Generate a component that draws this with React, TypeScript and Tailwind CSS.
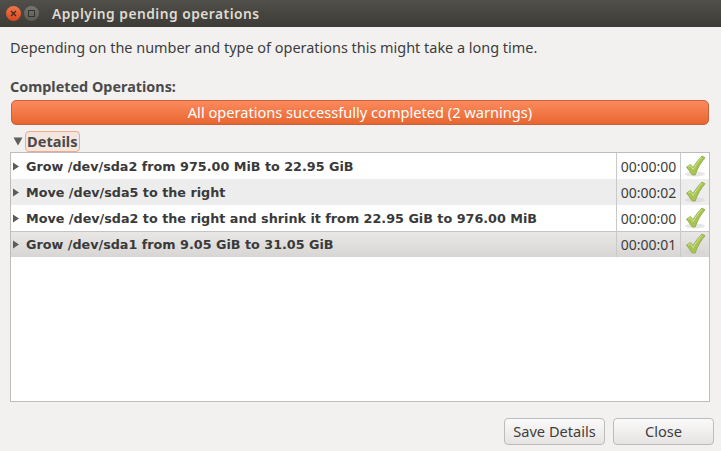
const rows = [
  { t: "Grow /dev/sda2 from 975.00 MiB to 22.95 GiB", d: "00:00:00", c: "bg-white" },
  { t: "Move /dev/sda5 to the right", d: "00:00:02", c: "bg-[#ededed]" },
  { t: "Move /dev/sda2 to the right and shrink it from 22.95 GiB to 976.00 MiB", d: "00:00:00", c: "bg-white" },
  { t: "Grow /dev/sda1 from 9.05 GiB to 31.05 GiB", d: "00:00:01", c: "bg-gradient-to-b from-[#e9e8e7] to-[#d8d6d4] shadow-[inset_0_1px_0_#c4c4c4]" },
];

function Check() {
  return (
    <svg width="22" height="24" viewBox="0 0 22 24" className="shrink-0">
      <ellipse cx="11" cy="20" rx="10" ry="2.5" fill="#d4d4d4" opacity="0.55" />
      <path d="M2.5 13 L6.5 10.5 L9 13.5 C11.5 9.5 14.5 5.5 18 2 L21 3.8 C17 8.5 13.5 14 11.2 21 L8.3 21 Z" fill="#a9c455" stroke="#8aa83e" strokeWidth="0.8" strokeLinejoin="round" />
      <path d="M4.2 13 L6.4 11.7 L9.2 15.4 C11.5 11 14.5 7 17.8 3.4" fill="none" stroke="#d2e68f" strokeWidth="1" />
    </svg>
  );
}

export default function App() {
  return (
    <div className="w-[721px] h-[451px] flex flex-col overflow-hidden bg-[#f2f1f0] font-['Noto_Sans',sans-serif] text-[#3c3c3c]">
      <div className="h-[27px] shrink-0 flex items-center bg-gradient-to-b from-[#514f49] to-[#3c3b37] pl-[6px]">
        <div className="w-[15px] h-[15px] rounded-full bg-gradient-to-b from-[#f0764a] to-[#d9471c] flex items-center justify-center">
          <svg width="7" height="7" viewBox="0 0 7 7"><path d="M1 1 L6 6 M6 1 L1 6" stroke="#41281f" strokeWidth="1.2" /></svg>
        </div>
        <div className="ml-[3px] w-[15px] h-[15px] rounded-full bg-gradient-to-b from-[#77756f] to-[#5c5a55] flex items-center justify-center">
          <div className="w-[7px] h-[7px] border border-[#35342f]" />
        </div>
        <span className="ml-[13px] text-[13.8px] font-semibold text-[#dfdbd2] tracking-[0.48px] leading-none">Applying pending operations</span>
      </div>
      <div className="flex-1 flex flex-col pl-[10px] pr-[11px]">
        <p className="mt-[12px] text-[14.45px] leading-[18px] text-[#3d3d3d]">Depending on the number and type of operations this might take a long time.</p>
        <p className="mt-[21px] text-[14.4px] leading-[18px] font-bold text-[#4a4a4a]">Completed Operations:</p>
        <div className="mt-[4px] mx-px h-[25px] rounded-[5px] border border-[#c9623a] bg-gradient-to-b from-[#fb8a5c] to-[#e8662f] flex items-center justify-center text-[14.6px] text-white">All operations successfully completed (2 warnings)</div>
        <div className="mt-[6px] h-[21px] flex items-center">
          <svg width="10" height="9" viewBox="0 0 10 9" className="ml-[3px]"><path d="M0.5 0.5 H9.5 L5 8.5 Z" fill="#5f5f5f" /></svg>
          <span className="ml-[2px] h-[21px] px-[1px] w-[55px] rounded-[4px] border border-[#efa98d] bg-[#f4e6df] text-[14.6px] leading-[19px] font-bold text-[#4a4a4a]">Details</span>
        </div>
        <div className="h-[250px] border border-[#bdbdbd] bg-white">
          {rows.map((r) => (
            <div key={r.t} className={`h-[26px] flex items-center ${r.c}`}>
              <svg width="8" height="9" viewBox="0 0 8 9" className="ml-[1px] shrink-0"><path d="M1 0.5 L7 4.5 L1 8.5 Z" fill="#5c5c5c" /></svg>
              <span className="ml-[6px] pt-[1px] flex-1 font-['DejaVu_Sans',sans-serif] text-[12.75px] font-bold text-[#3a3a3a] whitespace-nowrap">{r.t}</span>
              <div className="h-full w-[64px] border-l border-[#c9c9c9] flex items-center justify-center text-[14px] text-[#3d3d3d]">{r.d}</div>
              <div className="h-full w-[29px] border-l border-[#c9c9c9] flex items-center justify-center"><Check /></div>
            </div>
          ))}
        </div>
        <div className="mt-[16px] -mr-[4px] flex justify-end gap-[8px]">
          <button className="w-[101px] h-[27px] rounded-[4px] border border-[#bcbcbc] bg-gradient-to-b from-[#fbfafa] to-[#e6e4e2] text-[14.6px] text-[#3d3d3d]">Save Details</button>
          <button className="w-[101px] h-[27px] rounded-[4px] border border-[#bcbcbc] bg-gradient-to-b from-[#fbfafa] to-[#e6e4e2] text-[14.6px] text-[#3d3d3d]">Close</button>
        </div>
      </div>
    </div>
  );
}
